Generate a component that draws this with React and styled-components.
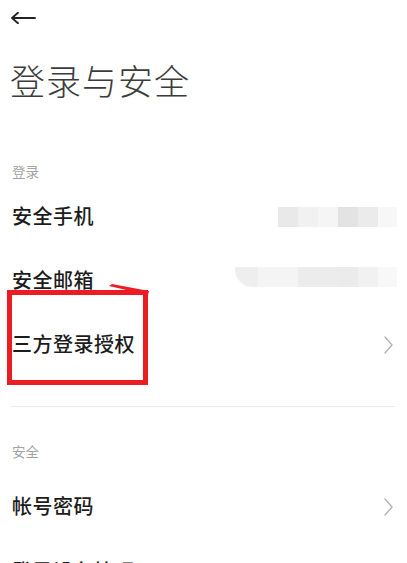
import React from 'react';
import styled, { createGlobalStyle } from 'styled-components';

const GlobalStyle = createGlobalStyle`
  html, body {
    margin: 0;
    padding: 0;
    background: #fff;
    overflow: hidden;
  }
  body {
    font-family: "Noto Sans CJK SC", "Noto Sans", sans-serif;
    -webkit-font-smoothing: antialiased;
  }
`;

const Page = styled.div`
  width: 407px;
  padding: 0 12px;
  box-sizing: border-box;
`;

const TopBar = styled.div`
  height: 36px;
  display: flex;
  align-items: center;
  margin-left: -2px;
`;

const BackButton = styled.button`
  border: 0;
  background: none;
  padding: 0;
  display: flex;
  align-items: center;
  cursor: pointer;
`;

const Title = styled.h1`
  margin: 22px 0 0 -2px;
  font-size: 35px;
  line-height: 44px;
  font-weight: 300;
  color: #3c3c3c;
  letter-spacing: 1px;
`;

const SectionLabel = styled.div`
  margin-top: ${p => p.$top}px;
  margin-bottom: ${p => p.$gap || 0}px;
  font-size: 13.5px;
  line-height: 24px;
  color: #a3a3a3;
`;

const Row = styled.div`
  position: relative;
  height: 64px;
  margin-top: ${p => p.$offset || 0}px;
  display: flex;
  align-items: center;
  justify-content: space-between;
`;

const RowText = styled.span`
  font-size: 20px;
  font-weight: 500;
  color: #1c1c1c;
  letter-spacing: 0.5px;
`;

const Chevron = styled.svg`
  margin-right: 2px;
  margin-top: 4px;
`;

const Divider = styled.div`
  margin-top: 31px;
  height: 1px;
  margin-left: -2px;
  background: #ececec;
`;

const Masked = styled.div`
  display: flex;
  height: 20px;
  margin-top: ${p => p.$shift || 0}px;
  margin-right: -2px;
  border-bottom-left-radius: ${p => p.$curve || 0}px;
  overflow: hidden;
`;

const Cell = styled.div`
  width: ${p => p.$w}px;
  background: ${p => p.$tone};
`;

const Annotation = styled.div`
  position: absolute;
  left: -5px;
  top: -21px;
  width: 141px;
  height: 95px;
  border: 5px solid #ec1c24;
  box-sizing: border-box;
  pointer-events: none;
`;

const Pointer = styled.svg`
  position: absolute;
  left: 96px;
  top: -28px;
`;

const phoneCells = [
  ['#e9e9e9', 20], ['#f1f1f1', 20], ['#f5f5f5', 20],
  ['#e3e3e3', 20], ['#ebebeb', 20], ['#f7f7f7', 19],
];

const mailCells = [
  ['#eeeeee', 23], ['#f4f4f4', 40], ['#ececec', 40],
  ['#ebebeb', 20], ['#f1f1f1', 20], ['#f8f8f8', 19],
];

const Arrow = () => (
  <svg width="26" height="12" viewBox="0 0 26 12" fill="none">
    <path d="M25 6H2M8 0.8L2 6l6 5.2" stroke="#222" strokeWidth="1.8" strokeLinecap="round" strokeLinejoin="round"/>
  </svg>
);

const Next = () => (
  <Chevron width="9" height="18" viewBox="0 0 9 18" fill="none">
    <path d="M1 1l7 8-7 8" stroke="#b3b3b3" strokeWidth="1.4" strokeLinecap="round" strokeLinejoin="round"/>
  </Chevron>
);

const App = () => (
  <Page>
    <GlobalStyle/>
    <TopBar>
      <BackButton aria-label="返回"><Arrow/></BackButton>
    </TopBar>
    <Title>登录与安全</Title>

    <SectionLabel $top={57}>登录</SectionLabel>
    <Row>
      <RowText>安全手机</RowText>
      <Masked $shift={4}>
        {phoneCells.map(([tone, w], i) => <Cell key={i} $tone={tone} $w={w}/>)}
      </Masked>
    </Row>
    <Row>
      <RowText>安全邮箱</RowText>
      <Masked $shift={-4} $curve={18}>
        {mailCells.map(([tone, w], i) => <Cell key={i} $tone={tone} $w={w}/>)}
      </Masked>
    </Row>
    <Row>
      <RowText>三方登录授权</RowText>
      <Next/>
      <Annotation/>
      <Pointer width="42" height="14" viewBox="0 0 42 14">
        <polygon points="1,3 4,1 41,8 40,12" fill="#ec1c24"/>
      </Pointer>
    </Row>

    <Divider/>

    <SectionLabel $top={32} $gap={10}>安全</SectionLabel>
    <Row>
      <RowText>帐号密码</RowText>
      <Next/>
    </Row>
    <Row $offset={1}>
      <RowText>登录设备管理</RowText>
      <Next/>
    </Row>
  </Page>
);

export default App;
